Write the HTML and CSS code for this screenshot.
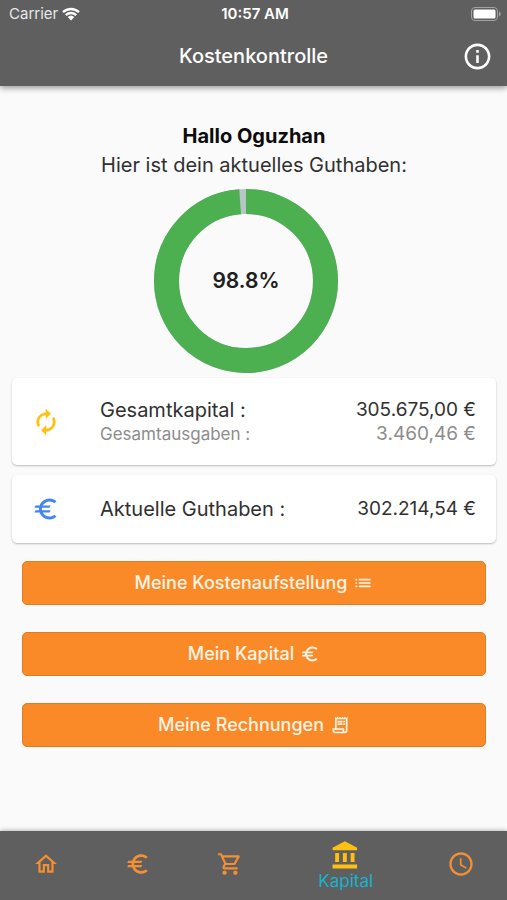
FILE: index.html
```html
<!DOCTYPE html>
<html lang="de">
<head>
<meta charset="utf-8">
<meta name="viewport" content="width=device-width, initial-scale=1">
<title>Kostenkontrolle</title>
<link rel="stylesheet" href="styles.css">
</head>
<body>
<svg class="sprite" aria-hidden="true">
  <symbol id="euro" viewBox="0 0 24 24"><path d="M15 18.5c-2.51 0-4.68-1.42-5.76-3.5H15l1-2H8.58c-.05-.33-.08-.66-.08-1s.03-.67.08-1H15l1-2H9.24C10.32 6.92 12.5 5.5 15 5.5c1.61 0 3.09.59 4.23 1.57L21 5.3C19.41 3.87 17.3 3 15 3c-3.92 0-7.24 2.51-8.48 6H3l-1 2h4.06c-.04.33-.06.66-.06 1s.02.67.06 1H3l-1 2h4.52c1.24 3.49 4.56 6 8.48 6 2.31 0 4.41-.87 6-2.3l-1.78-1.77c-1.13.98-2.6 1.57-4.22 1.57z"/></symbol>
</svg>

<header class="header">
  <div class="status">
    <span class="carrier">Carrier
      <svg class="wifi" viewBox="0 0 18 14"><path d="M1 5.2a11.6 11.6 0 0 1 16 0M3.8 8.1a7.6 7.6 0 0 1 10.4 0"/><path class="wifi-dot" d="M9 13.6 5.7 10.1a4.8 4.8 0 0 1 6.6 0z"/></svg>
    </span>
    <span class="time">10:57 AM</span>
    <svg class="battery" viewBox="0 0 30 14"><rect class="battery-case" x=".5" y=".5" width="26" height="13" rx="3.5"/><rect class="battery-fill" x="2.5" y="2.5" width="22" height="9" rx="1.5"/><path class="battery-tip" d="M28 4.5c2.3 1 2.3 4 0 5z"/></svg>
  </div>
  <div class="titlebar">
    <h1 class="title">Kostenkontrolle</h1>
    <button class="info" type="button" aria-label="Info">
      <svg class="icon icon-xl" viewBox="0 0 24 24"><path d="M11 7h2v2h-2zm0 4h2v6h-2zm1-9C6.48 2 2 6.48 2 12s4.48 10 10 10 10-4.48 10-10S17.52 2 12 2zm0 18c-4.41 0-8-3.59-8-8s3.59-8 8-8 8 3.59 8 8-3.59 8-8 8z"/></svg>
    </button>
  </div>
</header>

<main class="main">
  <h2 class="greeting">Hallo Oguzhan</h2>
  <p class="intro">Hier ist dein aktuelles Guthaben:</p>

  <div class="chart">
    <svg class="donut" viewBox="0 0 184 184">
      <circle class="donut-track" cx="92" cy="92" r="79.5"/>
      <circle class="donut-value" cx="92" cy="92" r="79.5" pathLength="100" stroke-dasharray="98.8 1.2" transform="rotate(-90 92 92)"/>
    </svg>
    <span class="percent">98.8%</span>
  </div>

  <section class="card card-tall">
    <svg class="icon icon-lg amber" viewBox="0 0 24 24"><path stroke="currentColor" stroke-width=".4" d="M12 6v3l4-4-4-4v3c-4.42 0-8 3.58-8 8 0 1.57.46 3.03 1.24 4.26L6.7 14.8c-.45-.83-.7-1.79-.7-2.8 0-3.31 2.69-6 6-6zm6.76 1.74L17.3 9.2c.44.84.7 1.79.7 2.8 0 3.31-2.69 6-6 6v-3l-4 4 4 4v-3c4.42 0 8-3.58 8-8 0-1.57-.46-3.03-1.24-4.26z"/></svg>
    <div class="rows">
      <div class="row"><span class="label">Gesamtkapital :</span><span>305.675,00 €</span></div>
      <div class="row row-muted"><span class="sub">Gesamtausgaben :</span><span>3.460,46 €</span></div>
    </div>
  </section>

  <section class="card">
    <svg class="icon icon-lg blue"><use href="#euro"/></svg>
    <div class="rows">
      <div class="row"><span class="label">Aktuelle Guthaben :</span><span>302.214,54 €</span></div>
    </div>
  </section>

  <div class="actions">
    <button class="action" type="button">Meine Kostenaufstellung
      <svg class="icon icon-sm" viewBox="0 0 24 24"><path d="M3 13h2v-2H3v2zm0 4h2v-2H3v2zm0-8h2V7H3v2zm4 4h14v-2H7v2zm0 4h14v-2H7v2zM7 7v2h14V7H7z"/></svg>
    </button>
    <button class="action" type="button">Mein Kapital
      <svg class="icon icon-sm"><use href="#euro"/></svg>
    </button>
    <button class="action" type="button">Meine Rechnungen
      <svg class="icon icon-sm" viewBox="0 0 24 24"><path d="M19.5 3.5 18 2l-1.5 1.5L15 2l-1.5 1.5L12 2l-1.5 1.5L9 2 7.5 3.5 6 2v14H3v3c0 1.66 1.34 3 3 3h12c1.66 0 3-1.34 3-3V2l-1.5 1.5zM15 20H6c-.55 0-1-.45-1-1v-1h10v2zm4-1c0 .55-.45 1-1 1s-1-.45-1-1v-3H8V5h11v14zM9 7h6v2H9zM16 7h2v2h-2zM9 10h6v2H9zM16 10h2v2h-2z"/></svg>
    </button>
  </div>
</main>

<nav class="nav">
  <a class="tab" href="#home" aria-label="Start"><svg class="icon icon-md" viewBox="0 0 24 24"><path d="M12 5.69l5 4.5V18h-2v-6H9v6H7v-7.81l5-4.5M12 3L2 12h3v8h6v-6h2v6h6v-8h3L12 3z"/></svg></a>
  <a class="tab" href="#kosten" aria-label="Kosten"><svg class="icon icon-md"><use href="#euro"/></svg></a>
  <a class="tab" href="#einkauf" aria-label="Einkauf"><svg class="icon icon-md" viewBox="0 0 24 24"><path d="M15.55 13c.75 0 1.41-.41 1.75-1.03l3.58-6.49c.37-.66-.11-1.48-.87-1.48H5.21l-.94-2H1v2h2l3.6 7.59-1.35 2.44C4.52 15.37 5.48 17 7 17h12v-2H7l1.1-2h7.45zM6.16 6h12.15l-2.76 5H8.53L6.16 6zM7 18c-1.1 0-1.99.9-1.99 2S5.9 22 7 22s2-.9 2-2-.9-2-2-2zm10 0c-1.1 0-1.99.9-1.99 2s.89 2 1.99 2 2-.9 2-2-.9-2-2-2z"/></svg></a>
  <a class="tab tab-active" href="#kapital" aria-current="page"><svg class="icon icon-xl amber" viewBox="0 0 24 24"><path d="M4 10v7h3v-7H4zm6 0v7h3v-7h-3zM2 22h19v-3H2v3zm14-12v7h3v-7h-3zm-4.5-9L2 6v2h19V6l-9.5-5z"/></svg>Kapital</a>
  <a class="tab" href="#verlauf" aria-label="Verlauf"><svg class="icon icon-lg" viewBox="0 0 24 24"><path d="M11.99 2C6.47 2 2 6.48 2 12s4.47 10 9.99 10C17.52 22 22 17.52 22 12S17.52 2 11.99 2zM12 20c-4.42 0-8-3.58-8-8s3.58-8 8-8 8 3.58 8 8-3.58 8-8 8zm.5-13H11v6l5.25 3.15.75-1.23-4.5-2.67z"/></svg></a>
</nav>
</body>
</html>
```
FILE: styles.css
```css
* {
  box-sizing: border-box;
}

body {
  margin: 0;
  min-height: 100vh;
  display: flex;
  flex-direction: column;
  background: #fafafa;
  color: #303030;
  font-family: Inter, "Liberation Sans", sans-serif;
  font-size: 19px;
  line-height: 24px;
}

button {
  font: inherit;
  color: inherit;
  border: 0;
  padding: 0;
  background: none;
  cursor: pointer;
}

.sprite {
  display: none;
}

.icon {
  display: block;
  flex: none;
  fill: currentColor;
}

.icon-sm { width: 20px; height: 20px; }
.icon-md { width: 26px; height: 26px; }
.icon-lg { width: 28px; height: 28px; }
.icon-xl { width: 31px; height: 31px; }

.amber { color: #ffc012; }
.blue { color: #4285f4; }

/* Header */
.header {
  background: #5f5f5f;
  color: #fff;
  box-shadow: 0 2px 6px rgba(0, 0, 0, .4);
}

.status {
  display: grid;
  grid-template-columns: 1fr auto 1fr;
  align-items: center;
  height: 28px;
  padding: 0 6px 0 9px;
  font-size: 15px;
}

.carrier {
  display: flex;
  align-items: center;
  gap: 4px;
  color: #e8e8e8;
}

.wifi {
  width: 18px;
  height: 14px;
  fill: none;
  stroke: #fff;
  stroke-width: 2.4;
}

.wifi-dot {
  fill: #fff;
  stroke: none;
}

.time {
  font-weight: 600;
}

.battery {
  justify-self: end;
  width: 30px;
  height: 14px;
}

.battery-case { fill: none; stroke: #a2a2a2; }
.battery-fill { fill: #fff; }
.battery-tip { fill: #a2a2a2; }

.titlebar {
  display: grid;
  grid-template-columns: 1fr auto 1fr;
  align-items: center;
  height: 58px;
  padding: 0 14px 2px;
}

.title {
  grid-column: 2;
  margin: 0;
  font-size: 20px;
  font-weight: 500;
}

.info {
  justify-self: end;
}

/* Content */
.main {
  flex: 1;
  padding: 38px 11px 24px 12px;
}

.greeting,
.intro {
  margin: 0;
  font-size: 20px;
  text-align: center;
}

.greeting {
  color: #0c0c0c;
  font-weight: 700;
}

.intro {
  margin-top: 5px;
}

.chart {
  display: grid;
  place-items: center;
  margin: 12px 16px 5px 0;
}

.donut,
.percent {
  grid-area: 1 / 1;
}

.donut {
  width: 184px;
  height: 184px;
  fill: none;
  stroke-width: 25;
}

.donut-track { stroke: #b8c4c9; }
.donut-value { stroke: #4caf50; }

.percent {
  color: #202020;
  font-size: 21px;
  font-weight: 600;
}

.card {
  display: flex;
  align-items: center;
  min-height: 68px;
  margin-bottom: 10px;
  padding: 0 20px;
  border-radius: 5px;
  background: #fff;
  box-shadow: 0 1px 2px rgba(0, 0, 0, .26);
}

.card-tall {
  min-height: 87px;
}

.rows {
  flex: 1;
  margin-left: 40px;
}

.row {
  display: flex;
  justify-content: space-between;
  align-items: center;
}

.row-muted {
  color: #8c8c8c;
}

.label {
  font-size: 20px;
}

.sub {
  font-size: 17px;
}

.actions {
  display: grid;
  gap: 27px;
  margin-top: 18px;
  padding: 0 10px;
}

.action {
  display: flex;
  align-items: center;
  justify-content: center;
  gap: 6px;
  height: 44px;
  border: 1px solid #df7c24;
  border-radius: 5px;
  background: #fa8a28;
  color: #fff3e4;
  font-size: 18px;
  font-weight: 500;
}

/* Bottom navigation */
.nav {
  display: flex;
  height: 69px;
  background: #5f5f5f;
  box-shadow: 0 -1px 4px rgba(0, 0, 0, .25);
}

.tab {
  flex: 2;
  display: flex;
  flex-direction: column;
  align-items: center;
  justify-content: center;
  padding-bottom: 3px;
  color: #f48f33;
  text-decoration: none;
}

.tab-active {
  flex: 3;
  padding-bottom: 0;
  color: #17b3c9;
  font-size: 17px;
  line-height: 20px;
}
```
